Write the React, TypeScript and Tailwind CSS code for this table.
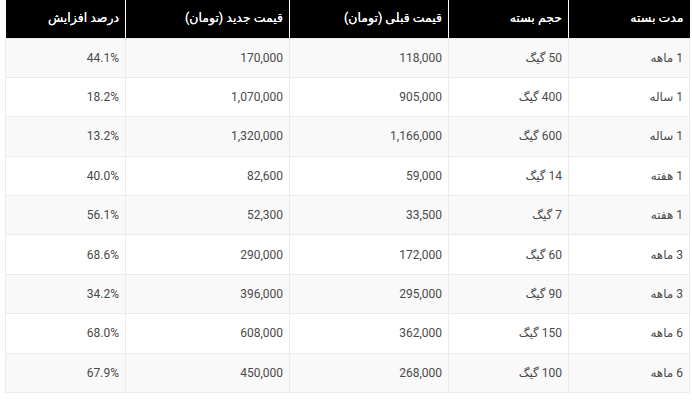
import React from "react";

const rows: [string, string, string, string, string][] = [
  ["1 ماهه", "50 گیگ", "118,000", "170,000", "44.1%"],
  ["1 ساله", "400 گیگ", "905,000", "1,070,000", "18.2%"],
  ["1 ساله", "600 گیگ", "1,166,000", "1,320,000", "13.2%"],
  ["1 هفته", "14 گیگ", "59,000", "82,600", "40.0%"],
  ["1 هفته", "7 گیگ", "33,500", "52,300", "56.1%"],
  ["3 ماهه", "60 گیگ", "172,000", "290,000", "68.6%"],
  ["3 ماهه", "90 گیگ", "295,000", "396,000", "34.2%"],
  ["6 ماهه", "150 گیگ", "362,000", "608,000", "68.0%"],
  ["6 ماهه", "100 گیگ", "268,000", "450,000", "67.9%"],
];

const headers = ["مدت بسته", "حجم بسته", "قیمت قبلی (تومان)", "قیمت جدید (تومان)", "درصد افزایش"];
const widths = ["w-[121px]", "w-[120px]", "w-[159px]", "w-[164px]", "w-[120px]"];

export default function App() {
  return (
    <div className="w-[692px] h-[400px] bg-white pl-[5px] pr-[3px]" style={{ fontFamily: "Roboto, 'DejaVu Sans', sans-serif" }}>
      <table dir="rtl" className="w-[684px] table-fixed border-collapse text-[12px]">
        <colgroup>
          {widths.map((w, i) => (
            <col key={i} className={w} />
          ))}
        </colgroup>
        <thead>
          <tr className="h-[38px] bg-black">
            {headers.map((h, i) => (
              <th
                key={i}
                className="text-right font-normal text-[12.5px] text-white px-[6px] border-l border-white last:border-l-0 align-middle [text-shadow:0_0_0.4px_#fff]"
              >
                {h}
              </th>
            ))}
          </tr>
        </thead>
        <tbody>
          {rows.map((r, ri) => (
            <tr key={ri} className={`h-[39.4px] ${ri % 2 === 0 ? "bg-[#f9f9f9]" : "bg-white"}`}>
              {r.map((c, ci) => (
                <td
                  key={ci}
                  className="text-right text-[#4a4a4a] px-[6px] border border-[#ececec] align-middle"
                >
                  {c}
                </td>
              ))}
            </tr>
          ))}
        </tbody>
      </table>
    </div>
  );
}
